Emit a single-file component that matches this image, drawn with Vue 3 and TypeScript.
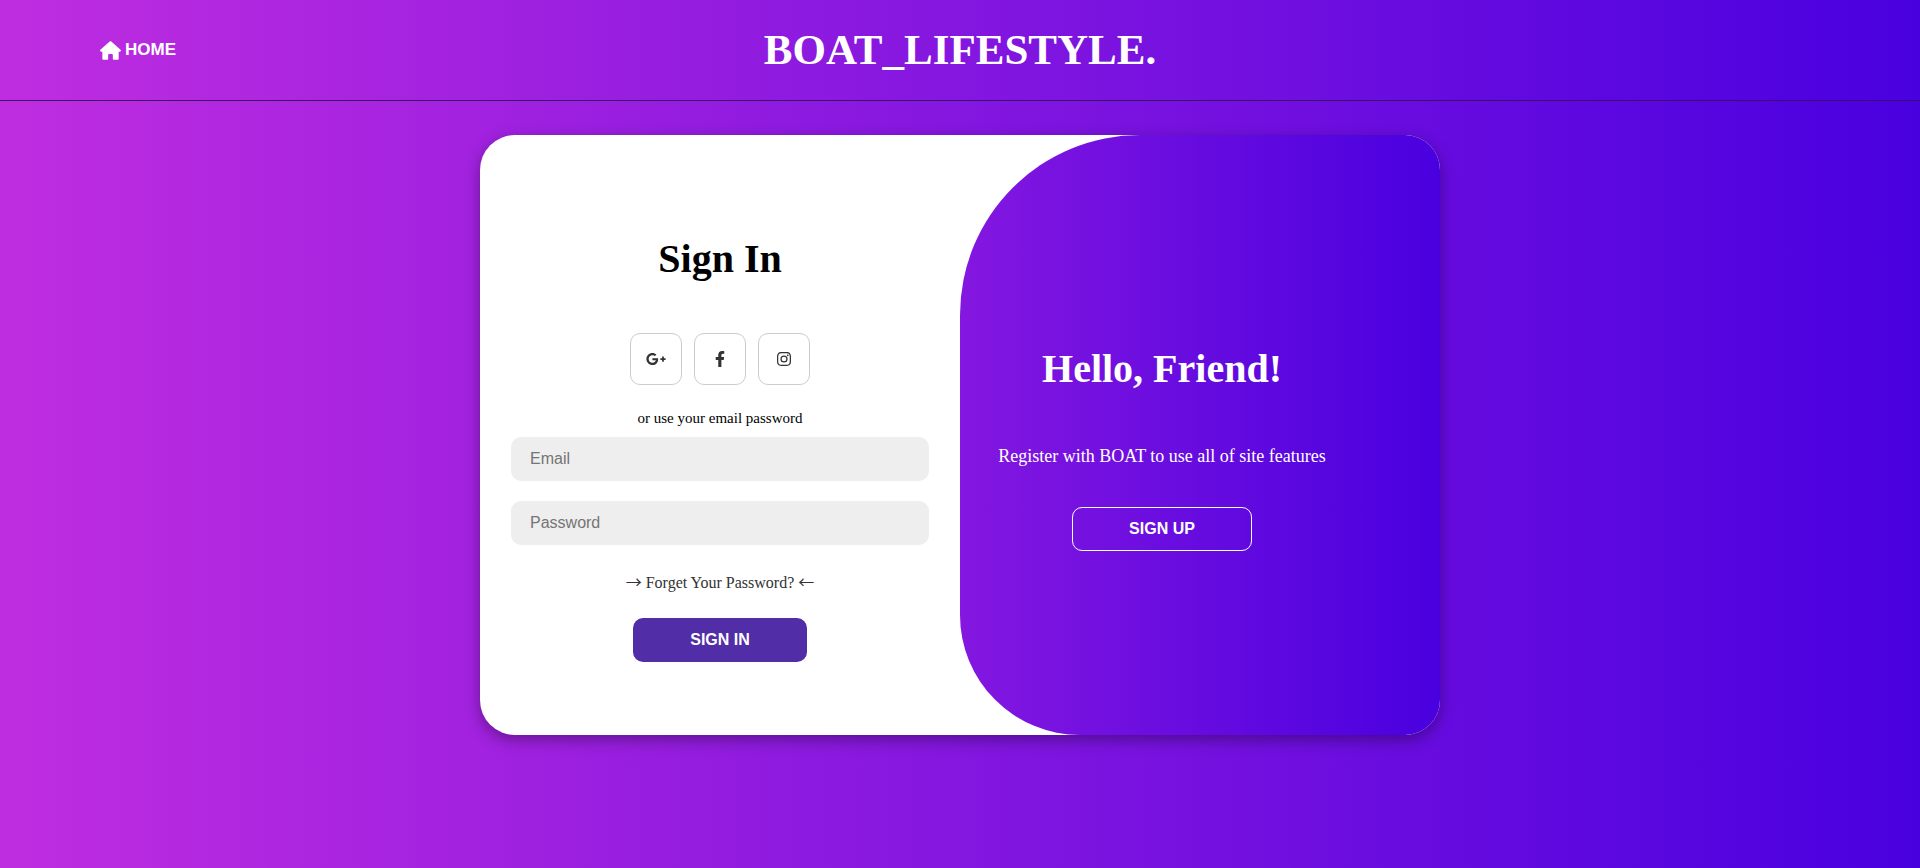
<script setup lang="ts">
import { ref } from 'vue'

const email = ref('')
const password = ref('')

interface Social {
  name: string
  width: number
  viewBox: string
  path: string
}

const socials: Social[] = [
  {
    name: 'Google Plus',
    width: 20,
    viewBox: '0 0 640 512',
    path: 'M386.061 228.496c1.834 9.692 3.143 19.384 3.143 31.956C389.204 370.205 315.599 448 204.8 448c-106.084 0-192-85.915-192-192s85.916-192 192-192c51.864 0 95.083 18.859 128.611 50.292l-52.126 50.03c-14.145-13.621-39.028-29.599-76.485-29.599-65.484 0-118.92 54.221-118.92 121.277 0 67.056 53.436 121.277 118.92 121.277 75.961 0 104.513-54.745 108.965-82.773H204.8v-66.009h181.261zm185.406 6.437V179.2h-56.001v55.733h-55.733v56.001h55.733v55.733h56.001v-55.733H627.2v-56.001h-55.733z',
  },
  {
    name: 'Facebook',
    width: 10,
    viewBox: '0 0 320 512',
    path: 'M279.14 288l14.22-92.66h-88.91v-60.13c0-25.35 12.42-50.06 52.24-50.06h40.42V6.26S260.43 0 225.36 0c-73.22 0-121.08 44.38-121.08 124.72v70.62H22.89V288h81.39v224h100.17V288z',
  },
  {
    name: 'Instagram',
    width: 14,
    viewBox: '0 0 448 512',
    path: 'M224 141a115 115 0 1 0 0 230 115 115 0 0 0 0-230zm0 190a75 75 0 1 1 0-150 75 75 0 0 1 0 150zm147-194a27 27 0 1 1-54 0 27 27 0 0 1 54 0zm76 27c-2-36-10-68-36-94s-58-34-94-36c-37-2-148-2-185 0-36 2-68 10-94 36S4 128 2 164c-2 37-2 148 0 185 2 36 10 68 36 94s58 34 94 36c37 2 148 2 185 0 36-2 68-10 94-36s34-58 36-94c2-37 2-148 0-185zm-48 225c-8 20-23 35-43 43-29 12-99 9-132 9s-103 3-132-9c-20-8-35-23-43-43-12-29-9-99-9-132s-3-103 9-132c8-20 23-35 43-43 29-12 99-9 132-9s103-3 132 9c20 8 35 23 43 43 12 29 9 99 9 132s3 103-9 132z',
  },
]
</script>

<template>
  <div class="page">
    <header class="header">
      <a class="home" href="#">
        <svg viewBox="0 0 576 512" width="21" height="19" aria-hidden="true">
          <path d="M576 256c0 18-15 32-32 32h-32v196c0 16-12 28-28 28H380c-16 0-28-12-28-28V384c0-18-14-32-32-32h-64c-18 0-32 14-32 32v100c0 16-12 28-28 28H92c-16 0-28-12-28-28V288H32c-18 0-32-14-32-32 0-9 3-17 10-24L266 8c7-7 15-8 22-8s15 2 21 7l255 225c8 7 12 15 12 24z" />
        </svg>
        <span>HOME</span>
      </a>
      <h1 class="brand">BOAT_LIFESTYLE.</h1>
    </header>

    <main class="card">
      <form class="signin" @submit.prevent>
        <h2 class="title">Sign In</h2>
        <div class="socials">
          <a v-for="s in socials" :key="s.name" class="social" href="#" :aria-label="s.name">
            <svg :viewBox="s.viewBox" :width="s.width" height="16" aria-hidden="true">
              <path :d="s.path" />
            </svg>
          </a>
        </div>
        <span class="hint">or use your email password</span>
        <input v-model="email" class="field" type="email" placeholder="Email" aria-label="Email" />
        <input v-model="password" class="field" type="password" placeholder="Password" aria-label="Password" />
        <a class="forgot" href="#"><span class="arrow">→</span> Forget Your Password? <span class="arrow">←</span></a>
        <button class="btn btn-solid" type="submit">SIGN IN</button>
      </form>

      <section class="welcome">
        <h2 class="title">Hello, Friend!</h2>
        <p class="note">Register with BOAT to use all of site features</p>
        <button class="btn btn-outline" type="button">SIGN UP</button>
      </section>
    </main>
  </div>
</template>

<style>
body {
  margin: 0;
}
</style>

<style scoped>
.page {
  min-height: 100vh;
  box-sizing: border-box;
  padding-bottom: 40px;
  font-family: "Liberation Serif", "Times New Roman", serif;
  background: linear-gradient(to right, #bf2de0, #4900df);
}

.header {
  display: grid;
  grid-template-columns: 1fr auto 1fr;
  align-items: center;
  height: 100px;
  padding: 0 100px;
  border-bottom: 1px solid #3d0a6b;
}

.home {
  display: flex;
  align-items: center;
  justify-self: start;
  gap: 4px;
  color: #fff;
  font: bold 17px/20px "Liberation Sans", Arial, sans-serif;
  text-decoration: none;
}

.home svg,
.social svg {
  fill: currentColor;
}

.brand {
  margin: 0;
  color: #fff;
  font-size: 43px;
  line-height: 52px;
}

.card {
  display: grid;
  grid-template-columns: 1fr 1fr;
  width: 50%;
  min-width: 760px;
  min-height: 600px;
  margin: 34px auto 0;
  overflow: hidden;
  border-radius: 35px;
  background: #fff;
  box-shadow: 0 5px 15px rgba(0, 0, 0, 0.35);
}

.signin,
.welcome {
  display: flex;
  flex-direction: column;
  align-items: center;
  justify-content: center;
}

.signin {
  padding: 27px 31px 0;
}

.title {
  margin: 0;
  font-size: 40px;
  line-height: 46px;
}

.socials {
  display: flex;
  gap: 12px;
  margin: 51px 0 24px;
}

.social {
  display: flex;
  align-items: center;
  justify-content: center;
  width: 50px;
  height: 50px;
  border: 1px solid #ccc;
  border-radius: 10px;
  color: #333;
}

.hint {
  font-size: 15px;
  line-height: 18px;
}

.field {
  box-sizing: border-box;
  width: 100%;
  height: 44px;
  margin: 10px 0;
  padding: 0 19px;
  border: none;
  border-radius: 10px;
  outline: none;
  background: #eee;
  font: 16px "Liberation Sans", Arial, sans-serif;
}

.field::placeholder {
  color: #757575;
}

.forgot {
  margin: 18px 0 25px;
  color: #333;
  font-size: 16px;
  line-height: 20px;
  text-decoration: none;
}

.arrow {
  font-family: "Noto Sans CJK SC", sans-serif;
  line-height: 1;
}

.btn {
  height: 44px;
  padding: 0 56px;
  border: 1px solid transparent;
  border-radius: 10px;
  color: #fff;
  font: bold 16px "Liberation Sans", Arial, sans-serif;
  cursor: pointer;
}

.btn-solid {
  background: #512da8;
}

.btn-outline {
  border-color: #fff;
  background: transparent;
}

.welcome {
  padding: 27px 76px 0 0;
  border-radius: 180px 0 0 120px;
  background: linear-gradient(to right, #8417e0, #4900df);
  color: #fff;
}

.note {
  margin: 54px 0 41px;
  font-size: 18px;
  line-height: 20px;
}
</style>
